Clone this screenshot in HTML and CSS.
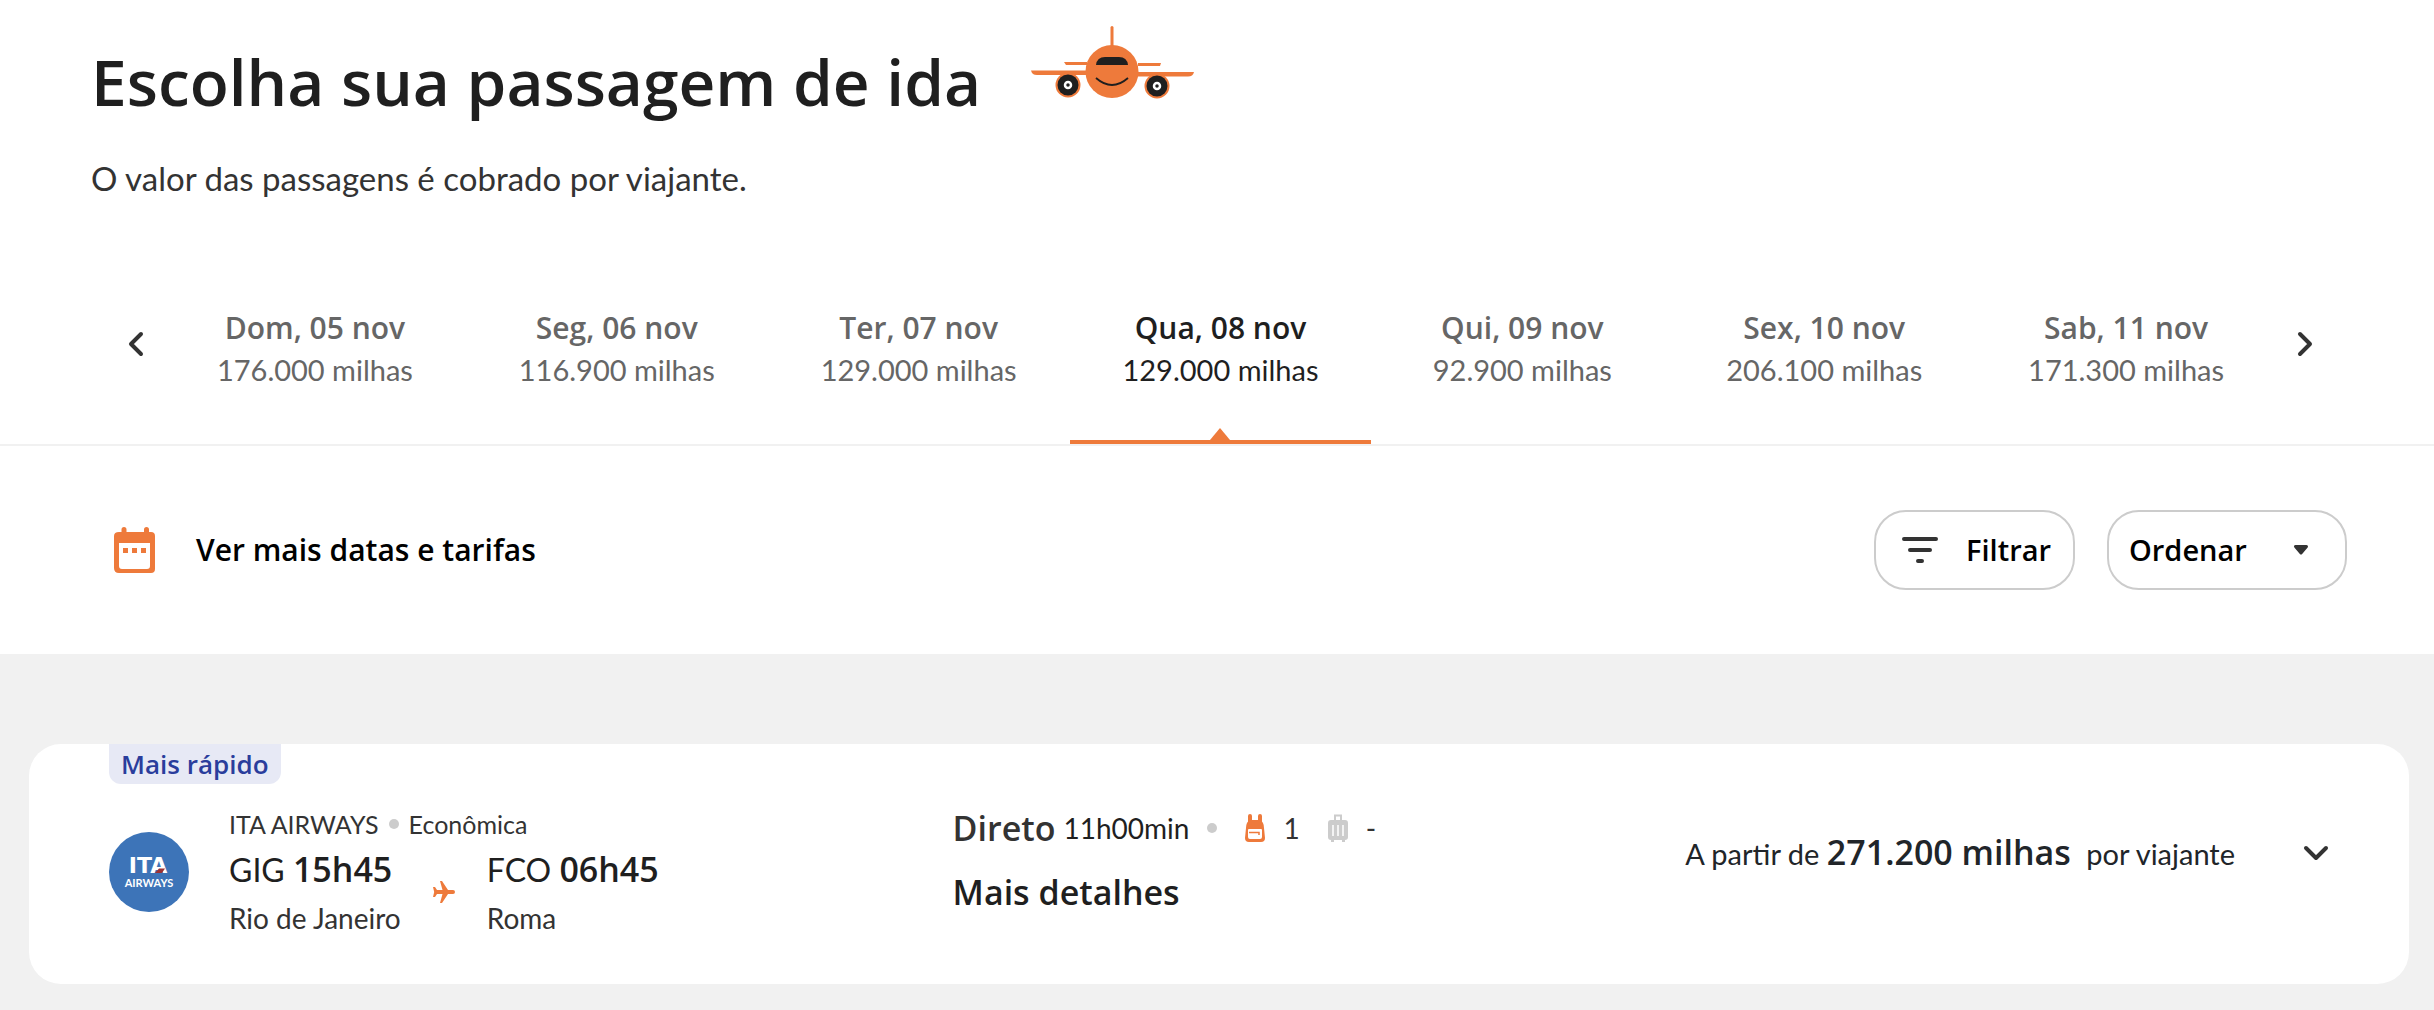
FILE: index.html
```html
<!DOCTYPE html>
<html lang="pt-BR">
<head>
  <meta charset="UTF-8">
  <meta name="viewport" content="width=device-width, initial-scale=1.0">
  <title>Escolha sua passagem de ida</title>
  <link rel="stylesheet" href="styles.css">
</head>
<body>
  <header class="page-header">
    <div class="title-row">
      <h1 class="title">Escolha sua passagem de ida</h1>
      <svg class="plane-mascot" viewBox="0 0 164 74" aria-hidden="true">
        <path d="M81 1.500V20" stroke="#ee7a3b" stroke-width="3" stroke-linecap="round"/>
        <path d="M33 36H56V39H35ZM107 37H130L129 40H107Z" fill="#ee7a3b"/>
        <path d="M0 44.500H56V49H6Q1 49 0 44.500ZM107 46H163Q162 50.500 157 50.500H107Z" fill="#ee7a3b"/>
        <circle cx="37" cy="59" r="12.500" fill="#ee7a3b"/>
        <circle cx="126" cy="60" r="12.500" fill="#ee7a3b"/>
        <circle cx="37" cy="59" r="10.500" fill="#1f1f1f"/>
        <circle cx="126" cy="60" r="10.500" fill="#1f1f1f"/>
        <circle cx="37" cy="59" r="3" fill="#1f1f1f" stroke="#fff" stroke-width="2.500"/>
        <circle cx="126" cy="60" r="3" fill="#1f1f1f" stroke="#fff" stroke-width="2.500"/>
        <circle cx="81" cy="45.500" r="26.500" fill="#ee7a3b"/>
        <path d="M65 39Q66 31 74 31H88Q96 31 97 39Z" fill="#1f1f1f"/>
        <path d="M65 52Q81 66 97 52" fill="none" stroke="#1f1f1f" stroke-width="1.800"/>
      </svg>
    </div>
    <p class="subtitle">O valor das passagens é cobrado por viajante.</p>
  </header>

  <nav class="dates" aria-label="Datas">
    <button type="button" class="arrow" aria-label="Datas anteriores">
      <svg width="16" height="26" viewBox="0 0 16 26"><path d="M13 3 3 13 13 23"/></svg>
    </button>
    <div class="date-list">
      <button type="button" class="date"><strong>Dom, 05 nov</strong><span>176.000 milhas</span></button>
      <button type="button" class="date"><strong>Seg, 06 nov</strong><span>116.900 milhas</span></button>
      <button type="button" class="date"><strong>Ter, 07 nov</strong><span>129.000 milhas</span></button>
      <button type="button" class="date active" aria-current="date"><strong>Qua, 08 nov</strong><span>129.000 milhas</span></button>
      <button type="button" class="date"><strong>Qui, 09 nov</strong><span>92.900 milhas</span></button>
      <button type="button" class="date"><strong>Sex, 10 nov</strong><span>206.100 milhas</span></button>
      <button type="button" class="date"><strong>Sab, 11 nov</strong><span>171.300 milhas</span></button>
    </div>
    <button type="button" class="arrow" aria-label="Próximas datas">
      <svg width="16" height="26" viewBox="0 0 16 26"><path d="M3 3 13 13 3 23"/></svg>
    </button>
  </nav>

  <section class="toolbar">
    <a href="#" class="more-dates">
      <svg width="42" height="46" viewBox="0 0 42 46" aria-hidden="true">
        <path d="M10 2.500V8M32.500 2.500V8" stroke="#ee7a3b" stroke-width="5" stroke-linecap="round"/>
        <path fill-rule="evenodd" fill="#ee7a3b" d="M5 5H37Q41 5 41 9V42Q41 46 37 46H5Q0 46 0 41V9Q0 5 5 5ZM5 16V39Q5 42 8 42H33Q36 42 36 39V16Z"/>
        <path d="M9 21H14V26H9ZM18 21H23V26H18ZM27 21H32V26H27Z" fill="#ee7a3b"/>
      </svg>
      <span>Ver mais datas e tarifas</span>
    </a>
    <div class="actions">
      <button type="button" class="pill filter">
        <svg width="36" height="28" viewBox="0 0 36 28" aria-hidden="true">
          <path d="M2 3H34M8 14H28M16 25H20" fill="none" stroke="#333" stroke-width="4" stroke-linecap="round"/>
        </svg>
        <span>Filtrar</span>
      </button>
      <div class="sort">
        <select class="pill sort-select" aria-label="Ordenar">
          <option>Ordenar</option>
        </select>
        <svg class="sort-arrow" width="16" height="12" viewBox="0 0 16 12" aria-hidden="true">
          <path d="M2.500 2.500H13.500L8 9Z" fill="#333" stroke="#333" stroke-width="3" stroke-linejoin="round"/>
        </svg>
      </div>
    </div>
  </section>

  <main class="results">
    <article class="flight">
      <span class="badge">Mais rápido</span>
      <div class="flight-body">
        <div class="route">
          <svg class="airline-logo" viewBox="0 0 80 80" role="img" aria-label="ITA Airways">
            <circle cx="40" cy="40" r="40" fill="#3d74b8"/>
            <text x="39" y="41" class="logo-name">ITA</text>
            <path d="M50 36.500H56L53 41H46Z" fill="#9c3234"/>
            <text x="40" y="55" class="logo-sub">AIRWAYS</text>
          </svg>
          <div class="route-info">
            <p class="airline">ITA AIRWAYS <i class="dot"></i> Econômica</p>
            <div class="legs">
              <div class="leg">
                <p class="time">GIG <strong>15h45</strong></p>
                <p class="city">Rio de Janeiro</p>
              </div>
              <svg class="leg-plane" width="24" height="22" viewBox="0 0 24 22" aria-hidden="true">
                <path fill="#ee7a3b" d="M8 0H10L16 9H21Q23 9 23 11T21 13H16L10 22H8L10.500 13H5L3 16H1L2.200 11 1 6H3L5 9H10.500Z"/>
              </svg>
              <div class="leg">
                <p class="time">FCO <strong>06h45</strong></p>
                <p class="city">Roma</p>
              </div>
            </div>
          </div>
        </div>

        <div class="details">
          <div class="stops">
            <strong>Direto</strong>
            <span class="duration">11h00min</span>
            <i class="dot"></i>
            <svg class="bag" width="20" height="28" viewBox="0 0 20 28" aria-hidden="true">
              <path d="M5 2V9M15 2V9" stroke="#ee7a3b" stroke-width="4" stroke-linecap="round"/>
              <path fill="#ee7a3b" fill-rule="evenodd" d="M5 6H15Q19 8 19 14L20 24Q20 28 16 28H4Q0 28 0 24L1 14Q1 8 5 6ZM4 15Q3 15 3 16V23Q3 25 5 25H15Q17 25 17 23V16Q17 15 16 15Z"/>
              <path d="M4 18.500H14V21" fill="none" stroke="#ee7a3b" stroke-width="1.500"/>
            </svg>
            <span class="count">1</span>
            <svg class="bag" width="20" height="28" viewBox="0 0 20 28" aria-hidden="true">
              <path d="M7 7V1.500H13V7" fill="none" stroke="#ccc" stroke-width="2"/>
              <path d="M3 6H17Q20 6 20 9V23Q20 26 17 26V28H14V26H6V28H3V26Q0 26 0 23V9Q0 6 3 6Z" fill="#ccc"/>
              <path d="M5 11V22M10 11V22M15 11V22" stroke="#fff" stroke-width="1.500"/>
            </svg>
            <span class="count">-</span>
          </div>
          <a href="#" class="more-details">Mais detalhes</a>
        </div>

        <div class="price">
          <p>A partir de <strong>271.200 milhas</strong> por viajante</p>
          <button type="button" class="arrow" aria-label="Expandir voo">
            <svg width="26" height="16" viewBox="0 0 26 16"><path d="M3 3 13 13 23 3"/></svg>
          </button>
        </div>
      </div>
    </article>
  </main>
</body>
</html>
```
FILE: styles.css
```css
* {
  box-sizing: border-box;
}
body {
  margin: 0;
  min-height: 100vh;
  display: flex;
  flex-direction: column;
  background: #fff;
  color: #333;
  font-family: Lato, sans-serif;
  font-size: 29px;
  line-height: 40px;
}
h1, p {
  margin: 0;
}
button, select {
  font: inherit;
  color: inherit;
  background: none;
  border: none;
  padding: 0;
  cursor: pointer;
}
a {
  color: inherit;
  text-decoration: none;
}
svg {
  display: block;
  flex: none;
}
strong, .title, .more-dates, .pill, .badge, .more-details {
  font-family: "Open Sans", sans-serif;
  font-weight: 600;
}

/* Header */
.page-header {
  padding: 26px 91px 0;
}
.title-row {
  display: flex;
  align-items: flex-start;
  gap: 50px;
}
.title {
  font-size: 64px;
  line-height: 112px;
  color: #1f1f1f;
}
.plane-mascot {
  width: 164px;
}
.subtitle {
  margin-top: 20px;
  font-size: 33px;
}

/* Date carousel */
.dates {
  display: flex;
  margin-top: 80px;
  padding: 0 101px 0 108px;
  border-bottom: 2px solid #f1f1f1;
}
.arrow svg {
  fill: none;
  stroke: #333;
  stroke-width: 4;
  stroke-linecap: round;
  stroke-linejoin: round;
}
.dates .arrow {
  display: flex;
  justify-content: center;
  width: 56px;
  padding-top: 53px;
}
.date-list {
  flex: 1;
  display: grid;
  grid-template-columns: repeat(7, 1fr);
}
.date {
  position: relative;
  display: flex;
  flex-direction: column;
  align-items: center;
  gap: 2px;
  padding: 30px 0 50px;
  border-bottom: 4px solid transparent;
  color: #666;
}
.date strong, .more-dates {
  font-size: 30px;
}
.date.active {
  color: #1f1f1f;
  border-color: #ee7a3b;
}
.date.active::after {
  content: "";
  position: absolute;
  bottom: 0;
  border: 10px solid transparent;
  border-top: none;
  border-bottom: 12px solid #ee7a3b;
}

/* Toolbar */
.toolbar {
  display: flex;
  align-items: center;
  justify-content: space-between;
  padding: 64px 87px 64px 114px;
  color: #000;
}
.more-dates {
  display: flex;
  align-items: center;
  gap: 40px;
}
.actions {
  display: flex;
  gap: 32px;
}
.pill {
  height: 80px;
  border: 2px solid #ccc;
  border-radius: 32px;
}
.filter {
  display: flex;
  align-items: center;
  gap: 28px;
  padding: 0 22px 0 26px;
}
.sort {
  display: grid;
  align-items: center;
}
.sort-select {
  grid-area: 1 / 1;
  appearance: none;
  padding: 0 98px 0 20px;
}
.sort-arrow {
  grid-area: 1 / 1;
  justify-self: end;
  margin-right: 38px;
  pointer-events: none;
}

/* Results */
.results {
  flex: 1;
  padding: 90px 25px 26px 29px;
  background: #f1f1f1;
}
.flight {
  padding: 0 80px 44px;
  border-radius: 32px;
  background: #fff;
}
.badge {
  display: inline-block;
  padding: 0 12px;
  border-radius: 0 0 12px 12px;
  background: #e7e9f5;
  color: #2a3d9c;
  font-size: 26px;
  vertical-align: top;
}
.flight-body {
  display: grid;
  grid-template-columns: 19fr 14fr 17fr;
  padding-top: 20px;
}
.route {
  display: flex;
  align-items: center;
  gap: 40px;
}
.airline-logo {
  width: 80px;
}
.logo-name, .logo-sub {
  fill: #fff;
  text-anchor: middle;
}
.logo-name {
  font-family: "DejaVu Sans", sans-serif;
  font-size: 22px;
  font-weight: 700;
}
.logo-sub {
  font-family: Lato, sans-serif;
  font-size: 11px;
  font-weight: 700;
}
.airline {
  display: flex;
  align-items: center;
  gap: 10px;
  font-size: 25px;
}
.dot {
  width: 10px;
  height: 10px;
  border-radius: 50%;
  background: #ccc;
}
.legs {
  display: flex;
  align-items: center;
  gap: 31px;
}
.time {
  font-size: 32px;
  line-height: 52px;
  color: #1f1f1f;
}
.time strong, .stops strong, .more-details, .price strong {
  font-size: 34px;
}
.time strong {
  line-height: 40px;
}
.city {
  font-size: 28px;
  line-height: 44px;
}
.details {
  padding-top: 4px;
}
.stops {
  display: flex;
  align-items: center;
  font-size: 28px;
}
.duration {
  margin: 0 18px 0 8px;
  color: #1f1f1f;
}
.bag {
  margin-left: 28px;
}
.count {
  margin-left: 18px;
}
.more-details {
  display: inline-block;
  margin-top: 24px;
  color: #1f1f1f;
}
.price {
  display: flex;
  justify-content: flex-end;
  gap: 68px;
  padding-top: 28px;
  color: #212529;
  align-self: start;
  white-space: nowrap;
}
.price strong {
  margin-right: 8px;
}
```
